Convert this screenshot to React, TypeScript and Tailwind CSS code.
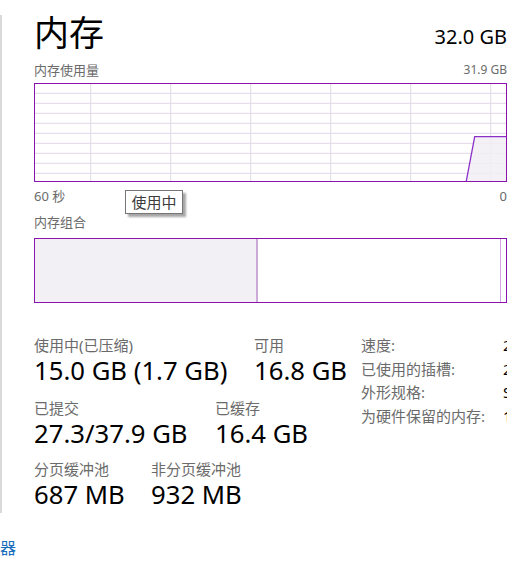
import React from "react";

const F = "font-['Noto_Sans','Noto_Sans_CJK_SC',sans-serif]";

function UsageChart() {
  const W = 471;
  const H = 97;
  const vx = [55.7, 135.7, 215.7, 295.7, 375.7, 455.7];
  const hy = [9.3, 19.3, 29.3, 39.3, 49.3, 59.3, 69.3, 79.3, 89.3];
  return (
    <div className="h-[99px] border border-[#8b12ae] bg-white">
      <svg width={W} height={H} className="block">
        {hy.map((y) => (
          <line key={"h" + y} x1={0} x2={W} y1={y} y2={y} stroke="#e2d8e8" strokeWidth={1} />
        ))}
        {vx.map((x) => (
          <line key={"v" + x} x1={x} x2={x} y1={0} y2={H} stroke="#e2d8e8" strokeWidth={1} />
        ))}
        <polygon points={`431.3,${H} 439.7,52.7 ${W},52.7 ${W},${H}`} fill="#f1eef3" fillOpacity={0.85} />
        <polyline points={`431.3,${H} 439.7,52.7 ${W},52.7`} fill="none" stroke="#8b2fc9" strokeWidth={1.3} />
      </svg>
    </div>
  );
}

function Stat({ label, value, w }: { label: string; value: string; w: string }) {
  return (
    <div className={w}>
      <div className="text-[15px] leading-[20px] text-[#6b6b6b]">{label}</div>
      <div className="text-[25.7px] leading-[30px] text-black mt-[1px]">{value}</div>
    </div>
  );
}

export default function App() {
  return (
    <div className={`relative w-[528px] h-[565px] overflow-hidden bg-white ${F}`}>
      <div className="pt-[15px]">
        <div className="relative h-[498px] border-l-2 border-[#dadada] pl-[32px] pr-[21px]">
          {/* header */}
          <div className="flex items-end justify-between h-[36px]">
            <div className="text-[35px] leading-[36px] text-black">内存</div>
            <div className="text-[20px] leading-[26px] text-black pb-[1px]">32.0 GB</div>
          </div>
          <div className="flex justify-between mt-[9px] h-[20px] text-[13px] leading-[20px] text-[#6b6b6b]">
            <span>内存使用量</span>
            <span className="text-[12px]">31.9 GB</span>
          </div>
          <div className="mt-[3px]">
            <UsageChart />
          </div>
          <div className="flex justify-between mt-[3px] h-[22px] text-[13px] leading-[22px] text-[#6b6b6b]">
            <span>60 秒</span>
            <span>0</span>
          </div>
          <div className="mt-[5px] h-[20px] text-[13px] leading-[20px] text-[#6b6b6b]">内存组合</div>
          <div className="mt-[6px] h-[65px] border border-[#8b12ae] flex bg-white">
            <div className="w-[221px] bg-[#f3f0f5]" />
            <div className="w-[2px] bg-[#cba9d8]" />
            <div className="flex-1 bg-white" />
            <div className="w-[1px] bg-[#cfa6df]" />
            <div className="w-[5px] bg-white" />
          </div>

          {/* tooltip */}
          <div className="absolute left-[123px] top-[175px] w-[58px] h-[24px] border border-[#767676] bg-white shadow-[3px_3px_2px_rgba(0,0,0,0.35)] flex items-center justify-center text-[15px] leading-[20px] text-[#3c3c3c]">
            使用中
          </div>

          {/* stats */}
          <div className="flex mt-[32px]">
            <div className="w-[327px]">
              <div className="flex">
                <Stat w="w-[220px]" label="使用中(已压缩)" value="15.0 GB (1.7 GB)" />
                <Stat w="w-[100px]" label="可用" value="16.8 GB" />
              </div>
              <div className="flex mt-[12px]">
                <Stat w="w-[181px]" label="已提交" value="27.3/37.9 GB" />
                <Stat w="w-[100px]" label="已缓存" value="16.4 GB" />
              </div>
              <div className="flex mt-[10px]">
                <Stat w="w-[117px]" label="分页缓冲池" value="687 MB" />
                <Stat w="w-[120px]" label="非分页缓冲池" value="932 MB" />
              </div>
            </div>
            <div className="w-[146px] overflow-hidden">
              <div className="grid grid-cols-[142px_120px] gap-y-[3.5px] text-[15px] leading-[20px] text-[#6b6b6b]">
                <span>速度:</span>
                <span className="text-black">2667 MHz</span>
                <span>已使用的插槽:</span>
                <span className="text-black">2/2</span>
                <span>外形规格:</span>
                <span className="text-black">SODIMM</span>
                <span>为硬件保留的内存:</span>
                <span className="text-black">126 MB</span>
              </div>
            </div>
          </div>
        </div>
      </div>
      <div className="absolute left-0 top-[537px] text-[16px] leading-[22px] text-[#1a6dbd]">器</div>
    </div>
  );
}
